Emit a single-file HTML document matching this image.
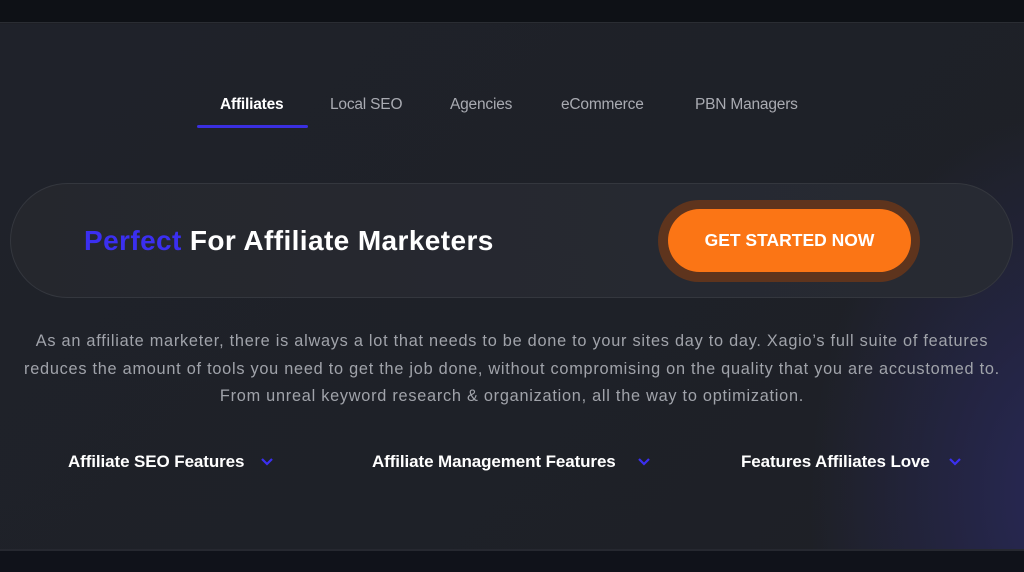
<!DOCTYPE html>
<html><head><meta charset="utf-8"><style>
*{margin:0;padding:0;box-sizing:border-box}
body{width:1024px;height:572px;overflow:hidden;background:#1e2026;font-family:"Liberation Sans",sans-serif;position:relative}
.top{position:absolute;left:0;top:0;width:1024px;height:23px;background:#0e1116;border-bottom:1px solid #2a2d33}
.main{position:absolute;left:0;top:24px;width:1024px;height:525px;background:radial-gradient(ellipse 260px 380px at 1070px 470px,#282858 0%,rgba(30,32,38,0) 100%),linear-gradient(135deg,#1f222a,#1e2026)}
.bot{position:absolute;left:0;top:549px;width:1024px;height:23px;background:#10121a;border-top:2px solid #262830}
.tab{position:absolute;top:96px;font-size:15.5px;color:#a9abb2;letter-spacing:-0.2px}
.ul{position:absolute;left:197px;top:125px;width:111px;height:3px;background:#3a2fe0;border-radius:2px}
.banner{position:absolute;left:10px;top:183px;width:1003px;height:115px;border-radius:58px;background:linear-gradient(90deg,#25272d,#272a33);border:1px solid #34373e}
.title{position:absolute;left:84px;top:225px;font-size:28px;font-weight:bold;color:#fff;letter-spacing:0.4px}
.title span{color:#3b2ff0}
.ring{position:absolute;left:658px;top:200px;width:262px;height:82px;border-radius:41px;background:#5e341d}
.btn{position:absolute;left:668px;top:209px;width:243px;height:63px;border-radius:32px;background:#fb7515;color:#fff;font-weight:bold;font-size:17.5px;text-align:center;line-height:63px;letter-spacing:0}
.p{position:absolute;left:-20px;width:1064px;text-align:center;top:328px;font-size:16.3px;line-height:27.5px;color:#a0a3aa;letter-spacing:0.75px}
.f{position:absolute;top:452px;font-size:17px;color:#fff;font-weight:bold;letter-spacing:-0.1px}
.f svg{position:absolute;top:5px}
</style></head><body>
<div class="top"></div>
<div class="main"></div>
<div class="bot"></div>
<div class="tab" style="left:220px;color:#fff;font-weight:bold">Affiliates</div>
<div class="tab" style="left:330px">Local SEO</div>
<div class="tab" style="left:450px">Agencies</div>
<div class="tab" style="left:561px">eCommerce</div>
<div class="tab" style="left:695px">PBN Managers</div>
<div class="ul"></div>
<div class="banner"></div>
<div class="title"><span>Perfect</span> For Affiliate Marketers</div>
<div class="ring"></div>
<div class="btn">GET STARTED NOW</div>
<div class="p">As an affiliate marketer, there is always a lot that needs to be done to your sites day to day. Xagio’s full suite of features<br>reduces the amount of tools you need to get the job done, without compromising on the quality that you are accustomed to.<br>From unreal keyword research &amp; organization, all the way to optimization.</div>
<div class="f" style="left:68px">Affiliate SEO Features<svg style="left:192px" width="14" height="10" viewBox="0 0 14 10"><path d="M2 2l5 5 5-5" stroke="#3b2ff0" stroke-width="2.2" fill="none"/></svg></div>
<div class="f" style="left:372px">Affiliate Management Features<svg style="left:265px" width="14" height="10" viewBox="0 0 14 10"><path d="M2 2l5 5 5-5" stroke="#3b2ff0" stroke-width="2.2" fill="none"/></svg></div>
<div class="f" style="left:741px">Features Affiliates Love<svg style="left:207px" width="14" height="10" viewBox="0 0 14 10"><path d="M2 2l5 5 5-5" stroke="#3b2ff0" stroke-width="2.2" fill="none"/></svg></div>
</body></html>
